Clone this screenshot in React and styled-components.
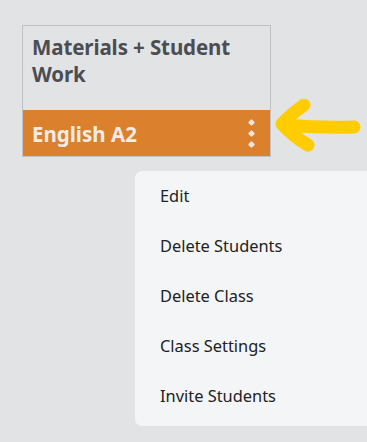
import styled, { createGlobalStyle } from "styled-components";

const GlobalStyle = createGlobalStyle`
  html, body {
    margin: 0;
    padding: 0;
    background: #e2e3e5;
    height: 100%;
  }
  body {
    font-family: 'Noto Sans', 'Open Sans', sans-serif;
    overflow: hidden;
  }
`;

const items = ["Edit", "Delete Students", "Delete Class", "Class Settings", "Invite Students"];

export default function App() {
  return (
    <Page>
      <GlobalStyle />
      <CardWrap>
        <Card>
          <CardTitle>Materials + Student Work</CardTitle>
          <CardBar>
            <ClassName>English A2</ClassName>
            <Kebab>
              <Dot />
              <Dot />
              <Dot />
            </Kebab>
          </CardBar>
        </Card>
        <Arrow viewBox="0 0 90 60" aria-hidden="true">
          <path
            d="M30 6 Q16 16 8 25 Q20 38 34 46 M10 26 Q45 29 80 28"
            fill="none"
            stroke="#ffcc00"
            strokeWidth="13"
            strokeLinecap="round"
            strokeLinejoin="round"
          />
        </Arrow>
        <Menu>
          {items.map((x) => (
            <MenuItem key={x}>{x}</MenuItem>
          ))}
        </Menu>
      </CardWrap>
    </Page>
  );
}

const Page = styled.div`
  width: 367px;
  height: 442px;
  padding: 25px 0 0 22px;
  box-sizing: border-box;
  overflow: hidden;
`;

const CardWrap = styled.div`
  position: relative;
  width: 249px;
`;

const Card = styled.div`
  width: 249px;
  height: 132px;
  box-sizing: border-box;
  border: 1px solid #bfc1c4;
  display: flex;
  flex-direction: column;
  justify-content: space-between;
`;

const CardTitle = styled.div`
  padding: 8px 9px 0 9px;
  font-size: 20.5px;
  font-weight: 700;
  line-height: 27px;
  color: #4b4d52;
  letter-spacing: -0.1px;
`;

const CardBar = styled.div`
  height: 46px;
  background: #db812e;
  display: flex;
  align-items: center;
  justify-content: space-between;
  padding: 0 16px 0 9px;
`;

const ClassName = styled.div`
  font-size: 20.5px;
  font-weight: 700;
  color: #f1ece6;
  margin-top: 2px;
`;

const Kebab = styled.div`
  display: flex;
  flex-direction: column;
  gap: 6px;
  align-items: center;
`;

const Dot = styled.span`
  width: 5px;
  height: 5px;
  background: #eee6de;
  transform: rotate(45deg);
  border-radius: 1px;
`;

const Arrow = styled.svg`
  position: absolute;
  left: 252px;
  top: 74px;
  width: 90px;
  height: 60px;
`;

const Menu = styled.div`
  position: absolute;
  left: 113px;
  top: 146px;
  width: 250px;
  background: #f4f5f7;
  border-radius: 7px;
  padding: 5px 0 0 0;
  display: flex;
  flex-direction: column;
`;

const MenuItem = styled.div`
  height: 50px;
  line-height: 40px;
  padding-left: 25px;
  font-size: 16.4px;
  color: #202124;
`;
